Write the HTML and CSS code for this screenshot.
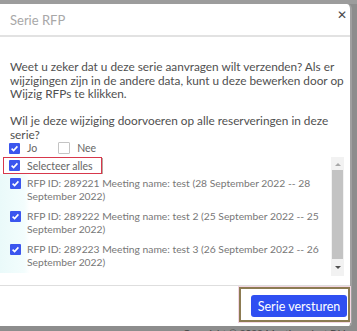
FILE: index.html
```html
<!DOCTYPE html>
<html>
<head>
<meta charset="utf-8">
<link rel="stylesheet" href="styles.css">
</head>
<body>
<div class="topstrip"></div>
<div class="modal">
  <div class="header">
    <span class="title">Serie RFP</span>
    <span class="close">&#10005;</span>
  </div>
  <div class="content">
    <p class="para">Weet u zeker dat u deze serie aanvragen wilt verzenden? Als er<br>wijzigingen zijn in de andere data, kunt u deze bewerken door op<br>Wijzig RFPs te klikken.</p>
    <p class="para">Wil je deze wijziging doorvoeren op alle reserveringen in deze<br>serie?</p>
    <div class="options">
      <label class="opt"><span class="cb on"><svg viewBox="0 0 11 11"><path d="M2.6 5.6 L4.6 7.5 L8.4 3.4" /></svg></span>Jo</label>
      <label class="opt"><span class="cb off"></span>Nee</label>
    </div>
    <div class="scrollwrap">
      <div class="list">
        <div class="selectall"><span class="cb on"><svg viewBox="0 0 11 11"><path d="M2.6 5.6 L4.6 7.5 L8.4 3.4" /></svg></span>Selecteer alles</div>
        <div class="item"><span class="cb on"><svg viewBox="0 0 11 11"><path d="M2.6 5.6 L4.6 7.5 L8.4 3.4" /></svg></span><span class="itxt">RFP ID: 289221 Meeting name: test (28 September 2022 -- 28<br>September 2022)</span></div>
        <div class="item"><span class="cb on"><svg viewBox="0 0 11 11"><path d="M2.6 5.6 L4.6 7.5 L8.4 3.4" /></svg></span><span class="itxt">RFP ID: 289222 Meeting name: test 2 (25 September 2022 -- 25<br>September 2022)</span></div>
        <div class="item"><span class="cb on"><svg viewBox="0 0 11 11"><path d="M2.6 5.6 L4.6 7.5 L8.4 3.4" /></svg></span><span class="itxt">RFP ID: 289223 Meeting name: test 3 (26 September 2022 -- 26<br>September 2022)</span></div>
      </div>
      <div class="scrollbar">
        <span class="arrow up"></span>
        <span class="thumb"></span>
        <span class="arrow down"></span>
      </div>
    </div>
  </div>
  <div class="footer">
    <div class="highlight"><button class="btn">Serie versturen</button></div>
  </div>
</div>
<div class="copyright">Copyright © 2022 Meetingselect B.V.</div>
</body>
</html>
```
FILE: styles.css
```css
html, body {
  margin: 0;
  padding: 0;
}
body {
  width: 357px;
  height: 331px;
  overflow: hidden;
  background: #8d8d8d;
  font-family: Lato, "Open Sans", sans-serif;
}
.topstrip {
  height: 4px;
  background: #9c9c9c;
}
.modal {
  width: 352px;
  height: 322px;
  background: #fff;
  border-right: 2px solid #a0a0a0;
  border-radius: 0 5px 3px 0;
  display: flex;
  flex-direction: column;
  box-sizing: border-box;
}
.header {
  height: 33px;
  border-bottom: 2px solid #e2e2e2;
  display: flex;
  align-items: flex-start;
  justify-content: space-between;
  padding: 0 0 0 10px;
  box-sizing: border-box;
}
.title {
  margin-top: 8px;
  font-size: 13px;
  color: #a8a8a8;
  line-height: 16px;
}
.close {
  margin-top: 4px;
  margin-right: 3px;
  font-size: 12px;
  font-weight: bold;
  color: #4a4a4a;
  font-family: "DejaVu Sans", sans-serif;
}
.content {
  padding: 23px 6px 0 10px;
  height: 249px;
  box-sizing: border-box;
  border-bottom: 1px solid #dedede;
}
.para {
  margin: 0 0 13.5px 0;
  font-size: 11.8px;
  line-height: 13.5px;
  color: #505050;
  white-space: nowrap;
}
.para + .para {
  margin-bottom: 0;
}
.options {
  display: flex;
  gap: 21px;
  height: 14px;
  align-items: center;
  margin-left: -1px;
}
.opt {
  display: flex;
  align-items: center;
  gap: 7px;
  font-size: 10.5px;
  color: #666;
}
.cb {
  width: 11px;
  height: 11px;
  box-sizing: border-box;
  border-radius: 1px;
  flex: none;
  display: inline-block;
}
.cb.on {
  background: #3b56ee;
}
.cb.on svg {
  width: 11px;
  height: 11px;
  display: block;
}
.cb.on path {
  fill: none;
  stroke: #fff;
  stroke-width: 1.6;
}
.cb.off {
  background: #fff;
  border: 1px solid #c4c4c4;
  width: 12px;
  height: 12px;
}
.scrollwrap {
  display: flex;
  height: 119px;
  margin-top: 2px;
}
.list {
  flex: 1;
}
.scrollbar {
  width: 13px;
  background: #f2f2f2;
  display: flex;
  flex-direction: column;
  align-items: center;
  padding-top: 6px;
  box-sizing: border-box;
}
.arrow {
  width: 0;
  height: 0;
  border-left: 3px solid transparent;
  border-right: 3px solid transparent;
}
.arrow.up {
  border-bottom: 3px solid #a8a8a8;
}
.arrow.down {
  border-top: 3px solid #505050;
  margin-top: 7px;
}
.thumb {
  width: 11px;
  height: 89px;
  margin-top: 4px;
  background: #c3c3c3;
}
.selectall {
  display: flex;
  align-items: center;
  gap: 7px;
  width: 99px;
  height: 17px;
  box-sizing: border-box;
  margin-left: -7px;
  padding-left: 5px;
  border: 1.5px solid #d7384c;
  box-shadow: 1px 1px 0 #b8a8a0;
  font-size: 10.5px;
  color: #666;
}
.item {
  display: flex;
  align-items: flex-start;
  gap: 6px;
  padding: 3px 0 4px 0;
  margin-left: -10px;
  padding-left: 10px;
  background: linear-gradient(to right, #eafafa 0, #f3fdfd 24px, #fff 30px);
}
.item .cb {
  margin-top: 1px;
}
.itxt {
  font-size: 10.3px;
  line-height: 13px;
  color: #777;
  white-space: nowrap;
}
.footer {
  flex: 1;
  display: flex;
  justify-content: flex-end;
  align-items: flex-start;
  padding-top: 1px;
  padding-right: 0;
}
.highlight {
  width: 111px;
  height: 35px;
  box-sizing: border-box;
  border: 2px solid #8c7b52;
  box-shadow: 0 0 0 1px #f3d6e2;
  display: flex;
  align-items: flex-start;
  justify-content: flex-end;
  padding: 6px 1px 0 0;
}
.btn {
  width: 96px;
  height: 22px;
  border: none;
  border-radius: 3px;
  background: #2f4ff2;
  color: #fff;
  font-family: Lato, "Open Sans", sans-serif;
  font-size: 12.5px;
  padding: 0;
}
.copyright {
  margin-top: 1px;
  padding-left: 183px;
  font-size: 10px;
  color: #444;
  line-height: 12px;
}
```
